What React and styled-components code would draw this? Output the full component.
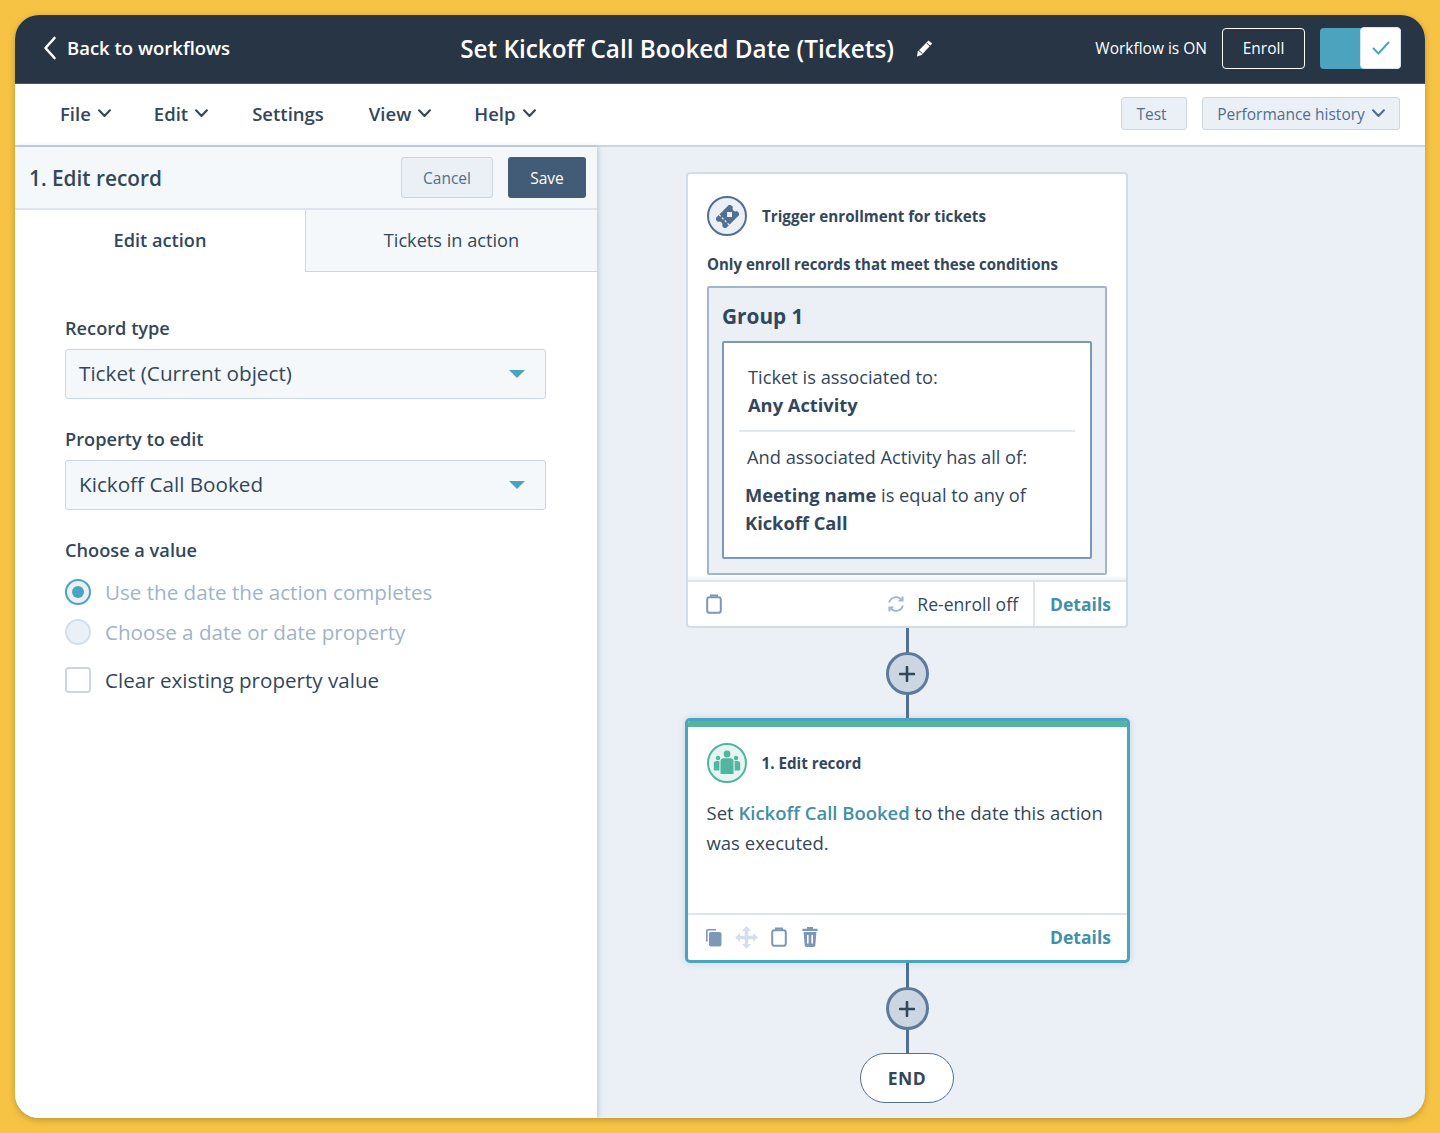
import React from "react";
import styled, { createGlobalStyle } from "styled-components";

const Global = createGlobalStyle`
  html, body { margin: 0; padding: 0; }
  body { background: #f6c344; font-family: "Open Sans", "Noto Sans", sans-serif; -webkit-font-smoothing: antialiased; }
  * { box-sizing: border-box; }
`;

const Page = styled.div`
  width: 1440px;
  height: 1133px;
  padding: 15px;
  background: #f6c344;
  overflow: hidden;
`;
const Frame = styled.div`
  width: 1410px;
  height: 1103px;
  border-radius: 24px;
  overflow: hidden;
  background: #eaf0f6;
  display: flex;
  flex-direction: column;
  box-shadow: 0 2px 6px rgba(90, 70, 20, 0.35);
`;
const TopBar = styled.header`
  height: 69px;
  flex: none;
  background: #283545;
  color: #fff;
  display: grid;
  grid-template-columns: auto 1fr auto;
  align-items: center;
  padding: 0 24px 0 28px;
  border-bottom: 1px solid #4a5666;
`;
const BackLink = styled.div`
  display: flex;
  align-items: center;
  gap: 10px;
  font-size: 18.5px;
  font-weight: 600;
  padding-bottom: 3px;
`;
const Title = styled.div`
  display: flex;
  align-items: center;
  gap: 22px;
  font-size: 24.3px;
  font-weight: 600;
  margin-left: 230px;
  padding-bottom: 2px;
`;
const TopRight = styled.div`
  display: flex;
  align-items: center;
  justify-content: flex-end;
  font-size: 15.5px;
  padding-bottom: 2px;
`;
const Enroll = styled.div`
  width: 83px;
  height: 41px;
  margin: 0 15px;
  border: 1.5px solid #fff;
  border-radius: 4px;
  display: flex;
  align-items: center;
  justify-content: center;
`;
const Toggle = styled.div`
  width: 81px;
  height: 41px;
  border-radius: 4px;
  background: #4ba3bd;
  display: flex;
  justify-content: flex-end;
`;
const ToggleKnob = styled.div`
  width: 41px;
  height: 42px;
  margin-top: -1px;
  background: #fff;
  border-radius: 4px;
  border: 1px solid #d6e6ec;
  display: flex;
  align-items: center;
  justify-content: center;
`;
const MenuBar = styled.nav`
  height: 63px;
  flex: none;
  background: #fff;
  border-bottom: 2px solid #cbd6e2;
  display: flex;
  align-items: center;
  padding: 0 25px 2px 45px;
`;
const MenuItem = styled.div`
  display: flex;
  align-items: center;
  gap: 7px;
  margin-right: ${(p) => p.$gap}px;
  font-size: 18.5px;
  font-weight: 600;
  color: #33475b;
`;
const MenuSpacer = styled.div`
  flex: 1;
`;
const GhostButton = styled.div`
  height: 33px;
  width: ${(p) => p.$w}px;
  margin-left: 15px;
  padding-right: ${(p) => p.$pr || 0}px;
  display: flex;
  align-items: center;
  justify-content: center;
  gap: 7px;
  background: #eaf0f6;
  border: 1px solid #cbd6e2;
  border-radius: 3px;
  color: #506e91;
  font-size: 15.5px;
`;
const Body = styled.div`
  flex: 1;
  min-height: 0;
  display: flex;
`;
const Panel = styled.aside`
  width: 582px;
  flex: none;
  background: #fff;
  box-shadow: 1px 0 5px rgba(120, 140, 165, 0.45);
  position: relative;
`;
const PanelHead = styled.div`
  height: 63px;
  background: #f5f8fa;
  border-bottom: 2px solid #dfe3eb;
  display: flex;
  align-items: center;
  padding: 0 11px 0 14px;
`;
const PanelTitle = styled.div`
  flex: 1;
  font-size: 20.8px;
  font-weight: 600;
  color: #33475b;
`;
const CancelButton = styled.div`
  width: 92px;
  height: 41px;
  display: flex;
  align-items: center;
  justify-content: center;
  background: #eaf0f6;
  border: 1px solid #cbd6e2;
  border-radius: 3px;
  color: #506e91;
  font-size: 15.5px;
  margin-right: 15px;
`;
const SaveButton = styled.div`
  width: 78px;
  height: 41px;
  display: flex;
  align-items: center;
  justify-content: center;
  background: #425b76;
  border-radius: 3px;
  color: #fff;
  font-size: 15.5px;
`;
const Tabs = styled.div`
  display: grid;
  grid-template-columns: 290px 1fr;
  height: 62px;
`;
const Tab = styled.div`
  display: flex;
  align-items: center;
  justify-content: center;
  padding-bottom: 2px;
  font-size: 18.2px;
  color: #33475b;
  font-weight: ${(p) => (p.$active ? 600 : 400)};
  background: ${(p) => (p.$active ? "#fff" : "#f5f8fa")};
  border-left: ${(p) => (p.$active ? "none" : "1px solid #cbd6e2")};
  border-bottom: ${(p) => (p.$active ? "none" : "1.5px solid #cbd6e2")};
`;
const Form = styled.div`
  padding: 43px 51px 0 50px;
`;
const Label = styled.div`
  font-size: 18.2px;
  font-weight: 600;
  color: #33475b;
  line-height: 26px;
  margin-bottom: 8px;
`;
const SelectBox = styled.div`
  height: 50px;
  background: #f5f8fa;
  border: 1.5px solid #cbd6e2;
  border-radius: 3px;
  display: flex;
  align-items: center;
  justify-content: space-between;
  padding: 0 20px 2px 13px;
  font-size: 20.7px;
  color: #33475b;
  margin-bottom: 27px;
`;
const Caret = styled.div`
  width: 0;
  height: 0;
  margin-top: 1px;
  border-left: 8px solid transparent;
  border-right: 8px solid transparent;
  border-top: 8px solid #4ba3bd;
`;
const OptionRow = styled.div`
  display: flex;
  align-items: center;
  gap: 14px;
  height: 26px;
  font-size: 20.6px;
  color: ${(p) => (p.$muted ? "#a1b3c9" : "#33475b")};
  margin-top: ${(p) => p.$top}px;
`;
const Radio = styled.div`
  width: 26px;
  height: 26px;
  flex: none;
  border-radius: 50%;
  background: #eaf0f6;
  border: 2px solid ${(p) => (p.$on ? "#4ba3bd" : "#d5deea")};
  display: flex;
  align-items: center;
  justify-content: center;
  &::after {
    content: "";
    display: ${(p) => (p.$on ? "block" : "none")};
    width: 12px;
    height: 12px;
    border-radius: 50%;
    background: #4ba3bd;
  }
`;
const Check = styled.div`
  width: 26px;
  height: 26px;
  flex: none;
  border-radius: 4px;
  background: #fff;
  border: 2px solid #cbd6e2;
`;
const Canvas = styled.main`
  flex: 1;
  min-width: 0;
  padding: 25px 0 0 88px;
`;
const Flow = styled.div`
  width: 444px;
  display: flex;
  flex-direction: column;
  align-items: center;
`;
const Card = styled.section`
  width: 442px;
  background: #fff;
  border: 2px solid #d2dce7;
  border-radius: 4px;
`;
const CardTop = styled.div`
  padding: 21px 19px 0 19px;
`;
const CardHeader = styled.div`
  display: flex;
  align-items: center;
  gap: 15px;
  height: 42px;
  font-size: 15.2px;
  font-weight: 700;
  color: #33475b;
`;
const IconCircle = styled.div`
  width: 40px;
  height: 40px;
  flex: none;
  border-radius: 50%;
  border: 2.5px solid ${(p) => (p.$green ? "#52b5a0" : "#516f90")};
  background: ${(p) => (p.$green ? "#e5f5f2" : "#eaf0f6")};
  display: flex;
  align-items: center;
  justify-content: center;
`;
const Conditions = styled.div`
  margin-top: 16px;
  font-size: 15.05px;
  font-weight: 700;
  color: #33475b;
  line-height: 22px;
`;
const Group = styled.div`
  margin-top: 11px;
  height: 289px;
  background: #eaf0f6;
  border: 2px solid #a3b5ca;
  border-radius: 2px;
  padding: 0 13px;
`;
const GroupTitle = styled.div`
  height: 53px;
  display: flex;
  align-items: center;
  font-size: 20.8px;
  font-weight: 700;
  color: #33475b;
  padding-top: 2px;
`;
const Rule = styled.div`
  height: 218px;
  background: #fff;
  border: 2px solid #7c98b6;
  border-radius: 2px;
  padding: 20px 15px 0;
  font-size: 18.3px;
  line-height: 28px;
  color: #33475b;
`;
const Indent = styled.div`
  padding-left: ${(p) => p.$l}px;
`;
const Strong = styled.span`
  font-weight: 700;
`;
const RuleDivider = styled.div`
  height: 2px;
  background: #e3e9f0;
  margin: 11px 0 11px;
`;
const RuleGap = styled.div`
  height: 10px;
`;
const Fade = styled.div`
  height: 5px;
  background: linear-gradient(#fff, #eef2f6);
`;
const CardFooter = styled.div`
  height: ${(p) => p.$h}px;
  flex: none;
  border-top: 2px solid #dfe3eb;
  display: flex;
  align-items: center;
  padding: 0 0 ${(p) => p.$pb || 0}px ${(p) => p.$pl}px;
  gap: ${(p) => p.$gap}px;
`;
const Reenroll = styled.div`
  margin-left: auto;
  display: flex;
  align-items: center;
  gap: 12px;
  padding-right: 15px;
  font-size: 17.6px;
  color: #33475b;
`;
const DetailsCell = styled.div`
  height: 100%;
  width: ${(p) => (p.$plain ? 92 : 93)}px;
  flex: none;
  border-left: ${(p) => (p.$plain ? "none" : "2px solid #dfe3eb")};
  margin-left: ${(p) => (p.$plain ? "auto" : "0")};
  display: flex;
  align-items: center;
  justify-content: center;
  font-size: 17.5px;
  font-weight: 700;
  color: #4190a8;
`;
const Line = styled.div`
  width: 3px;
  height: ${(p) => p.$h}px;
  background: #516f90;
  flex: none;
`;
const AddButton = styled.div`
  width: 43px;
  height: 43px;
  flex: none;
  margin: -1px 0;
  border-radius: 50%;
  background: #cbd6e2;
  border: 3px solid #5f7a99;
  display: flex;
  align-items: center;
  justify-content: center;
  position: relative;
`;
const ActionCard = styled.section`
  width: 445px;
  height: 245px;
  background: #fff;
  border: 3px solid #4ba3bd;
  border-radius: 5px;
  display: flex;
  flex-direction: column;
  overflow: hidden;
  box-shadow: 0 0 6px rgba(120, 140, 165, 0.3);
`;
const GreenBar = styled.div`
  height: 6px;
  background: #52b5a0;
  flex: none;
`;
const ActionTop = styled.div`
  flex: 1;
  padding: 15px 19px 0 19px;
`;
const ActionText = styled.p`
  margin: 14px 0 0;
  font-size: 18.5px;
  line-height: 30px;
  color: #33475b;
`;
const TealText = styled.span`
  color: #4190a8;
  font-weight: 600;
`;
const End = styled.div`
  width: 94px;
  height: 50px;
  flex: none;
  border-radius: 25px;
  background: #fff;
  border: 1.5px solid #516f90;
  display: flex;
  align-items: center;
  justify-content: center;
  font-size: 17.5px;
  font-weight: 700;
  color: #33475b;
  letter-spacing: 0.5px;
`;

const Chevron = ({ size = 13, color = "#33475b" }) => (
  <svg width={size} height={size * 0.67} viewBox="0 0 12 8" fill="none">
    <path d="M1 1.2 6 6.4 11 1.2" stroke={color} strokeWidth="1.9" strokeLinecap="round" strokeLinejoin="round" />
  </svg>
);
const BackArrow = () => (
  <svg width="14" height="24" viewBox="0 0 14 24" fill="none">
    <path d="M11.5 2 2.5 12l9 10" stroke="#fff" strokeWidth="2.6" strokeLinecap="round" strokeLinejoin="round" />
  </svg>
);
const Pencil = () => (
  <svg width="17" height="17" viewBox="0 0 17 17">
    <path d="M12.4 0.6 16.2 3.6 5.6 15 1 16.4 1.8 11.6Z" fill="#fff" />
    <path d="M10.6 3 14 6M3 10.6l3.4 3" stroke="#283545" strokeWidth="1" />
  </svg>
);
const CheckMark = () => (
  <svg width="18" height="14" viewBox="0 0 18 14" fill="none">
    <path d="M1.5 7.5 6.5 12.5 16.5 1.5" stroke="#4ba3bd" strokeWidth="2" strokeLinecap="round" />
  </svg>
);
const Ticket = () => (
  <svg width="23" height="23" viewBox="0 0 24 24">
    <g transform="rotate(-45 12 12)">
      <path fillRule="evenodd" fill="#516f90" d="M1 4.5h22v4.6a3 3 0 0 0 0 5.8v4.6H1v-4.6a3 3 0 0 0 0-5.8ZM15 8.4 11.4 12l3.6 3.6 3.6-3.6Z" />
      <path d="M7 4.5v15" stroke="#eaf0f6" strokeWidth="1.3" strokeDasharray="2.4 1.8" />
    </g>
  </svg>
);
const People = () => (
  <svg width="30" height="26" viewBox="0 0 30 26" fill="#52b5a0">
    <circle cx="15" cy="4" r="3.4" />
    <path d="M11.5 8.2h7a3 3 0 0 1 3 3V24h-13V11.2a3 3 0 0 1 3-3Z" />
    <circle cx="6" cy="8" r="2.2" />
    <path d="M4.6 11h2.8v9.5H3a1.2 1.2 0 0 1-1.2-1.2v-5.5A2.8 2.8 0 0 1 4.6 11Z" />
    <circle cx="24" cy="8" r="2.2" />
    <path d="M22.6 11h2.8a2.8 2.8 0 0 1 2.8 2.8v5.5a1.2 1.2 0 0 1-1.2 1.2h-4.4Z" />
  </svg>
);
const Clipboard = () => (
  <svg width="16" height="20" viewBox="0 0 16 20" fill="none">
    <rect x="1.2" y="3.2" width="13.6" height="15.6" rx="2.4" stroke="#7c98b6" strokeWidth="2" />
    <path d="M5 3V1.6h6V3" stroke="#7c98b6" strokeWidth="2" />
  </svg>
);
const Copy = () => (
  <svg width="17" height="19" viewBox="0 0 17 19">
    <path d="M3 1h8v1.6H3.6A1 1 0 0 0 2.6 3.6v10H1V3a2 2 0 0 1 2-2Z" fill="#7c98b6" />
    <rect x="4" y="4" width="12.5" height="14.5" rx="2" fill="#7c98b6" />
  </svg>
);
const Move = () => (
  <svg width="23" height="23" viewBox="0 0 23 23" fill="#d5deea">
    <path d="M11.5 0 16 5h-2.7v4.7H18V7l5 4.5-5 4.5v-2.7h-4.7V18H16l-4.5 5L7 18h2.7v-4.7H5V16l-5-4.5L5 7v2.7h4.7V5H7Z" />
  </svg>
);
const Trash = () => (
  <svg width="18" height="20" viewBox="-2 0 18 20">
    <path fill="#7c98b6" d="M5 0h6v1.8h4.6v2.2H.4V1.8H5ZM1.6 5h12.8l-1 13a2 2 0 0 1-2 2H4.6a2 2 0 0 1-2-2Z" />
    <path d="M5.8 8v8.5M10.2 8v8.5" stroke="#fff" strokeWidth="1.6" />
  </svg>
);
const Refresh = () => (
  <svg width="18" height="18" viewBox="0 0 18 18" fill="none" stroke="#a3b5ca" strokeWidth="1.9">
    <path d="M2.2 7.5A7 7 0 0 1 14.6 5" />
    <path d="M15.8 10.5A7 7 0 0 1 3.4 13" />
    <path d="M15.6 1.6v4h-4M2.4 16.4v-4h4" />
  </svg>
);
const Plus = () => (
  <svg width="16" height="16" viewBox="0 0 16 16">
    <path d="M8 1v14M1 8h14" stroke="#33475b" strokeWidth="2.6" strokeLinecap="round" />
  </svg>
);

export default function App() {
  return (
    <Page>
      <Global />
      <Frame>
        <TopBar>
          <BackLink><BackArrow />Back to workflows</BackLink>
          <Title>Set Kickoff Call Booked Date (Tickets)<Pencil /></Title>
          <TopRight>
            Workflow is ON
            <Enroll>Enroll</Enroll>
            <Toggle><ToggleKnob><CheckMark /></ToggleKnob></Toggle>
          </TopRight>
        </TopBar>
        <MenuBar>
          <MenuItem $gap={43}>File<Chevron /></MenuItem>
          <MenuItem $gap={44}>Edit<Chevron /></MenuItem>
          <MenuItem $gap={45}>Settings</MenuItem>
          <MenuItem $gap={43}>View<Chevron /></MenuItem>
          <MenuItem $gap={0}>Help<Chevron /></MenuItem>
          <MenuSpacer />
          <GhostButton $w={66} $pr={5}>Test</GhostButton>
          <GhostButton $w={198}>Performance history<Chevron color="#506e91" /></GhostButton>
        </MenuBar>
        <Body>
          <Panel>
            <PanelHead>
              <PanelTitle>1. Edit record</PanelTitle>
              <CancelButton>Cancel</CancelButton>
              <SaveButton>Save</SaveButton>
            </PanelHead>
            <Tabs>
              <Tab $active>Edit action</Tab>
              <Tab>Tickets in action</Tab>
            </Tabs>
            <Form>
              <Label>Record type</Label>
              <SelectBox>Ticket (Current object)<Caret /></SelectBox>
              <Label>Property to edit</Label>
              <SelectBox>Kickoff Call Booked<Caret /></SelectBox>
              <Label>Choose a value</Label>
              <OptionRow $muted $top={16}><Radio $on />Use the date the action completes</OptionRow>
              <OptionRow $muted $top={14}><Radio />Choose a date or date property</OptionRow>
              <OptionRow $top={22}><Check />Clear existing property value</OptionRow>
            </Form>
          </Panel>
          <Canvas>
            <Flow>
              <Card>
                <CardTop>
                  <CardHeader>
                    <IconCircle><Ticket /></IconCircle>
                    Trigger enrollment for tickets
                  </CardHeader>
                  <Conditions>Only enroll records that meet these conditions</Conditions>
                  <Group>
                    <GroupTitle>Group 1</GroupTitle>
                    <Rule>
                      <Indent $l={9}>Ticket is associated to:</Indent>
                      <Indent $l={9}><Strong>Any Activity</Strong></Indent>
                      <RuleDivider />
                      <Indent $l={8}>And associated Activity has all of:</Indent>
                      <RuleGap />
                      <Indent $l={6}><Strong>Meeting name</Strong> is equal to any of</Indent>
                      <Indent $l={6}><Strong>Kickoff Call</Strong></Indent>
                    </Rule>
                  </Group>
                </CardTop>
                <Fade />
                <CardFooter $h={46} $pl={18} $gap={0}>
                  <Clipboard />
                  <Reenroll><Refresh />Re-enroll off</Reenroll>
                  <DetailsCell>Details</DetailsCell>
                </CardFooter>
              </Card>
              <Line $h={25} />
              <AddButton><Plus /></AddButton>
              <Line $h={24} />
              <ActionCard>
                <GreenBar />
                <ActionTop>
                  <CardHeader>
                    <IconCircle $green><People /></IconCircle>
                    1. Edit record
                  </CardHeader>
                  <ActionText>
                    Set <TealText>Kickoff Call Booked</TealText> to the date this action was executed.
                  </ActionText>
                </ActionTop>
                <CardFooter $h={47} $pl={17} $gap={13} $pb={1}>
                  <Copy />
                  <Move />
                  <Clipboard />
                  <Trash />
                  <DetailsCell $plain>Details</DetailsCell>
                </CardFooter>
              </ActionCard>
              <Line $h={25} />
              <AddButton><Plus /></AddButton>
              <Line $h={24} />
              <End>END</End>
            </Flow>
          </Canvas>
        </Body>
      </Frame>
    </Page>
  );
}
